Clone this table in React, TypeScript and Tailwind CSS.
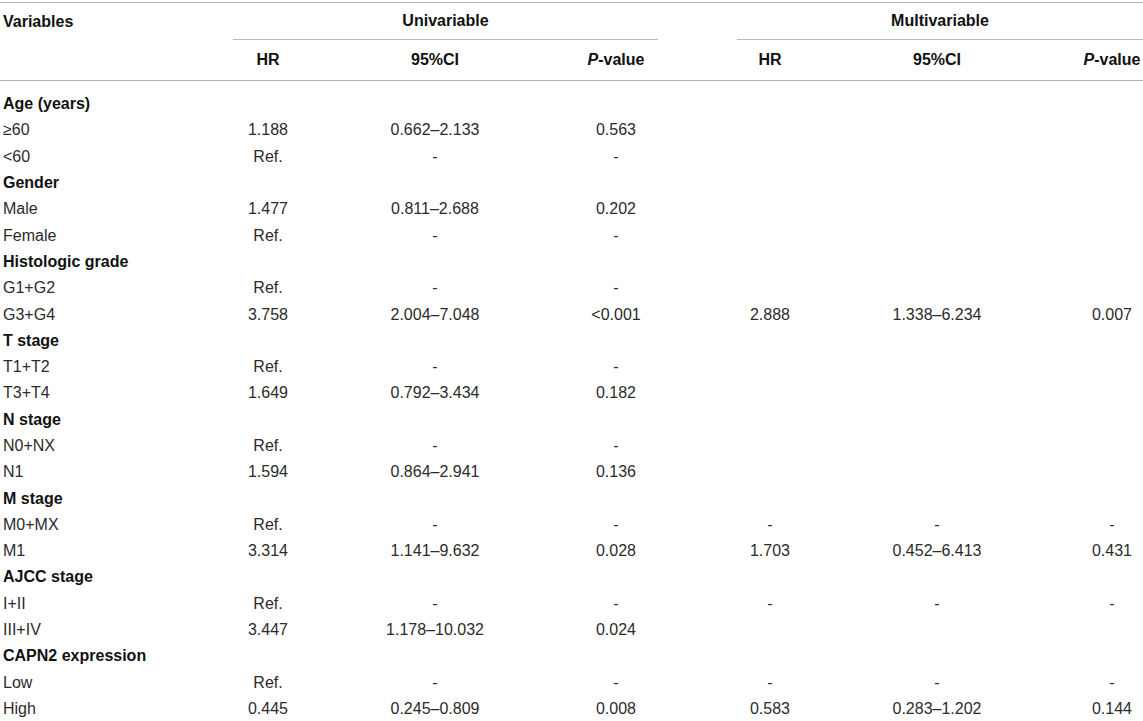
import React from "react";

type Row =
  | { kind: "cat"; label: string }
  | { kind: "data"; label: string; v: string[] };

const rows: Row[] = [
  { kind: "cat", label: "Age (years)" },
  { kind: "data", label: "≥60", v: ["1.188", "0.662–2.133", "0.563"] },
  { kind: "data", label: "<60", v: ["Ref.", "-", "-"] },
  { kind: "cat", label: "Gender" },
  { kind: "data", label: "Male", v: ["1.477", "0.811–2.688", "0.202"] },
  { kind: "data", label: "Female", v: ["Ref.", "-", "-"] },
  { kind: "cat", label: "Histologic grade" },
  { kind: "data", label: "G1+G2", v: ["Ref.", "-", "-"] },
  { kind: "data", label: "G3+G4", v: ["3.758", "2.004–7.048", "<0.001", "2.888", "1.338–6.234", "0.007"] },
  { kind: "cat", label: "T stage" },
  { kind: "data", label: "T1+T2", v: ["Ref.", "-", "-"] },
  { kind: "data", label: "T3+T4", v: ["1.649", "0.792–3.434", "0.182"] },
  { kind: "cat", label: "N stage" },
  { kind: "data", label: "N0+NX", v: ["Ref.", "-", "-"] },
  { kind: "data", label: "N1", v: ["1.594", "0.864–2.941", "0.136"] },
  { kind: "cat", label: "M stage" },
  { kind: "data", label: "M0+MX", v: ["Ref.", "-", "-", "-", "-", "-"] },
  { kind: "data", label: "M1", v: ["3.314", "1.141–9.632", "0.028", "1.703", "0.452–6.413", "0.431"] },
  { kind: "cat", label: "AJCC stage" },
  { kind: "data", label: "I+II", v: ["Ref.", "-", "-", "-", "-", "-"] },
  { kind: "data", label: "III+IV", v: ["3.447", "1.178–10.032", "0.024"] },
  { kind: "cat", label: "CAPN2 expression" },
  { kind: "data", label: "Low", v: ["Ref.", "-", "-", "-", "-", "-"] },
  { kind: "data", label: "High", v: ["0.445", "0.245–0.809", "0.008", "0.583", "0.283–1.202", "0.144"] },
];

const grid =
  "grid grid-cols-[233px_70px_264px_7px_84px_79px_66px_268px_10px_62px]";

const colStart = [
  "col-start-2",
  "col-start-3",
  "col-start-5",
  "col-start-7",
  "col-start-8",
  "col-start-10",
];

function PVal() {
  return (
    <span>
      <i>P</i>-value
    </span>
  );
}

export default function App() {
  return (
    <div
      className="w-[1143px] h-[721px] bg-white overflow-hidden pt-[2px] text-[16px]"
      style={{ fontFamily: '"Liberation Sans", Arial, Helvetica, sans-serif' }}
    >
      <div className="border-t border-[#b0b0b0]">
        {/* header row 1 */}
        <div className={`${grid} h-[37px] font-bold text-[#111]`}>
          <div className="col-start-1 flex items-center pl-[3px]">Variables</div>
          <div className="col-start-2 col-span-4 flex items-center justify-center border-b border-[#b8b8b8]">
            Univariable
          </div>
          <div className="col-start-7 col-span-4 flex items-center justify-center border-b border-[#b8b8b8]">
            Multivariable
          </div>
        </div>
        {/* header row 2 */}
        <div className={`${grid} h-[41px] font-bold text-[#111] border-b border-[#b0b0b0]`}>
          <div className="col-start-2 flex items-center justify-center">HR</div>
          <div className="col-start-3 flex items-center justify-center">95%CI</div>
          <div className="col-start-5 flex items-center justify-center">
            <PVal />
          </div>
          <div className="col-start-7 flex items-center justify-center">HR</div>
          <div className="col-start-8 flex items-center justify-center">95%CI</div>
          <div className="col-start-10 flex items-center justify-center whitespace-nowrap">
            <PVal />
          </div>
        </div>
        {/* body */}
        <div className="pt-[10px]">
          {rows.map((r, i) =>
            r.kind === "cat" ? (
              <div key={i} className={`${grid} h-[26.3px]`}>
                <div className="col-start-1 col-span-4 flex items-center pl-[3px] font-bold text-[#111] whitespace-nowrap">
                  {r.label}
                </div>
              </div>
            ) : (
              <div key={i} className={`${grid} h-[26.3px] text-[#2b2b2b]`}>
                <div className="col-start-1 flex items-center pl-[3px]">{r.label}</div>
                {r.v.map((v, j) => (
                  <div
                    key={j}
                    className={`${colStart[j]} flex items-center justify-center whitespace-nowrap`}
                  >
                    {v}
                  </div>
                ))}
              </div>
            )
          )}
        </div>
      </div>
    </div>
  );
}
